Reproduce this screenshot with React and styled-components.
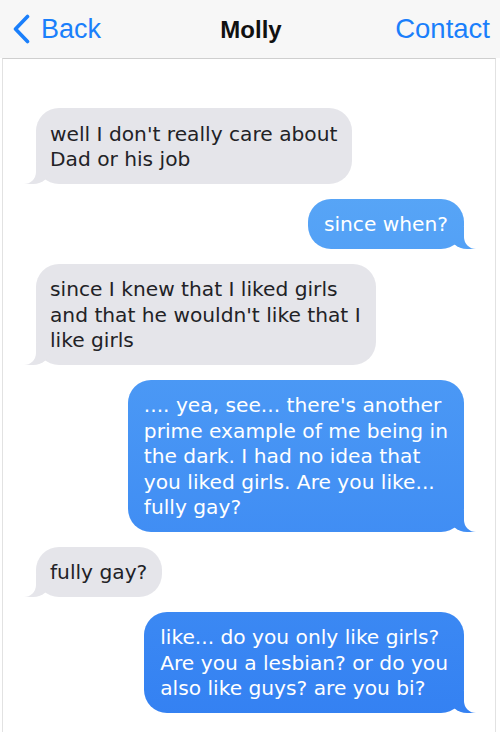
import React from "react";
import styled, { createGlobalStyle, css } from "styled-components";

const Global = createGlobalStyle`
  html, body { margin: 0; padding: 0; background: #ffffff; }
  body { font-family: "DejaVu Sans", Verdana, sans-serif; }
`;

const Page = styled.div`
  width: 500px;
  min-height: 732px;
  display: flex;
  flex-direction: column;
`;

const NavBar = styled.header`
  height: 58px;
  background: #f7f7f7;
  display: grid;
  grid-template-columns: 1fr auto 1fr;
  align-items: center;
  padding: 0 10px 0 12px;
  font-family: "Liberation Sans", Arial, sans-serif;
`;

const BackButton = styled.div`
  display: flex;
  align-items: center;
  gap: 11px;
  color: #1a7ffb;
  font-size: 27px;
  justify-self: start;
`;

const Title = styled.div`
  font-weight: bold;
  font-size: 24px;
  color: #111;
  padding-top: 2px;
`;

const ContactButton = styled.div`
  justify-self: end;
  color: #1a7ffb;
  font-size: 27.5px;
`;

const Thread = styled.main`
  flex: 1;
  margin: 0 4px 0 2px;
  border-top: 1px solid #cfcfcf;
  border-left: 1px solid #e2e2e2;
  border-right: 1px solid #e2e2e2;
  padding: 49px 31px 16px 33px;
  display: flex;
  flex-direction: column;
  gap: 14.5px;
`;

const blueFill = css`
  background: linear-gradient(to bottom, #64b2f8 0px, #3380f2 732px);
  background-attachment: fixed;
`;

const Bubble = styled.div`
  position: relative;
  width: fit-content;
  padding: 13.5px 15px 11.5px 14px;
  border-radius: 23px;
  font-size: 20.2px;
  line-height: 25.5px;
  white-space: nowrap;
  ${(p) =>
    p.$me
      ? css`
          align-self: flex-end;
          color: #ffffff;
          ${blueFill};
          padding-left: 16px;
          padding-right: 16px;
        `
      : css`
          align-self: flex-start;
          color: #222226;
          background: #e5e5ea;
        `}

  &::before {
    content: "";
    position: absolute;
    bottom: 0;
    height: 22px;
    width: 28px;
    ${(p) =>
      p.$me
        ? css`
            right: -13px;
            ${blueFill};
            border-bottom-left-radius: 18px 16px;
          `
        : css`
            left: -13px;
            background: #e5e5ea;
            border-bottom-right-radius: 18px 16px;
          `}
  }

  &::after {
    content: "";
    position: absolute;
    bottom: 0;
    height: 23px;
    width: 30px;
    background: #ffffff;
    ${(p) =>
      p.$me
        ? css`
            right: -30px;
            border-bottom-left-radius: 12px;
          `
        : css`
            left: -30px;
            border-bottom-right-radius: 12px;
          `}
  }
`;

const messages = [
  { me: false, lines: ["well I don't really care about", "Dad or his job"] },
  { me: true, lines: ["since when?"] },
  {
    me: false,
    lines: [
      "since I knew that I liked girls",
      "and that he wouldn't like that I",
      "like girls",
    ],
  },
  {
    me: true,
    lines: [
      ".... yea, see... there's another",
      "prime example of me being in",
      "the dark. I had no idea that",
      "you liked girls. Are you like...",
      "fully gay?",
    ],
  },
  { me: false, lines: ["fully gay?"] },
  {
    me: true,
    lines: [
      "like... do you only like girls?",
      "Are you a lesbian? or do you",
      "also like guys? are you bi?",
    ],
  },
];

export default function App() {
  return (
    <Page>
      <Global />
      <NavBar>
        <BackButton>
          <svg width="18" height="30" viewBox="0 0 18 30" fill="none">
            <path
              d="M15.5 2.5 L3.5 15 L15.5 27.5"
              stroke="#1a7ffb"
              strokeWidth="3.6"
              strokeLinecap="round"
              strokeLinejoin="round"
            />
          </svg>
          <span>Back</span>
        </BackButton>
        <Title>Molly</Title>
        <ContactButton>Contact</ContactButton>
      </NavBar>
      <Thread>
        {messages.map((m, i) => (
          <Bubble key={i} $me={m.me}>
            {m.lines.map((l, j) => (
              <React.Fragment key={j}>
                {j > 0 && <br />}
                {l}
              </React.Fragment>
            ))}
          </Bubble>
        ))}
      </Thread>
    </Page>
  );
}
